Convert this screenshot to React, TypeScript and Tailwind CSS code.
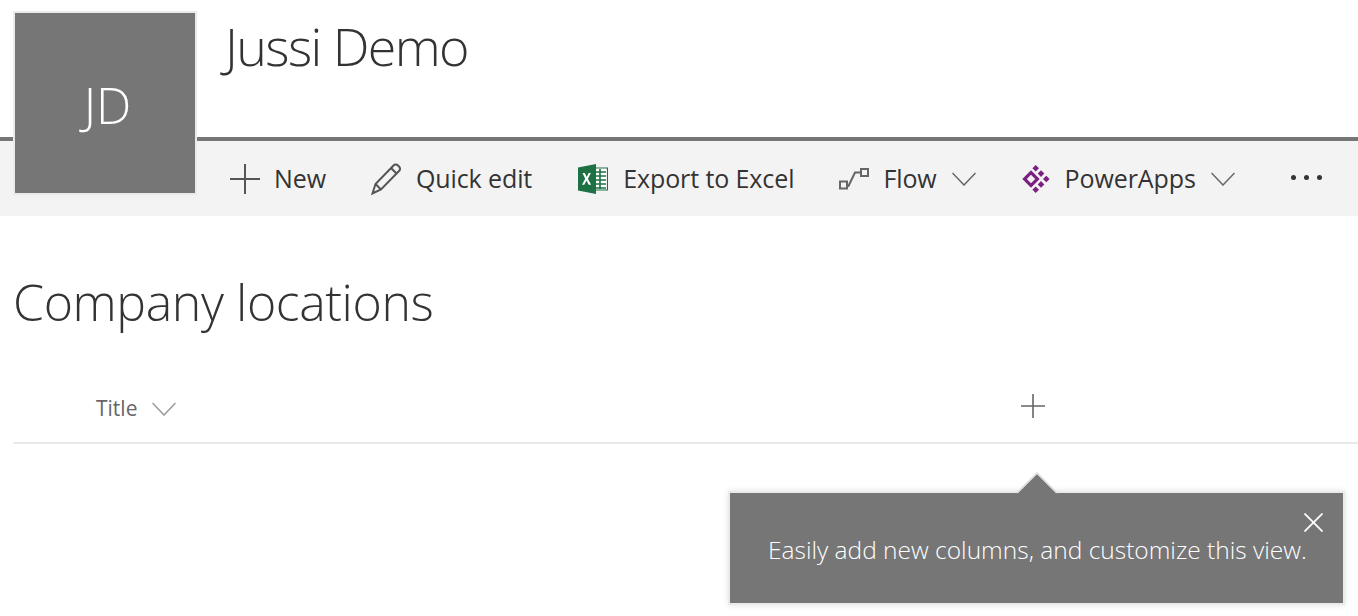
const FONT = "font-['Open_Sans','Noto_Sans',sans-serif]";

function PlusIcon({ className }: { className?: string }) {
  return (
    <svg viewBox="0 0 30 30" className={className} fill="none" stroke="currentColor" strokeWidth="2">
      <path d="M0 15H30M15 0V30" />
    </svg>
  );
}

function PencilIcon() {
  return (
    <svg viewBox="0 0 30 32" className="h-8 w-[30px] text-[#555]" fill="none" stroke="currentColor" strokeWidth="2">
      <path d="M1.500 30.500 4.500 21 22.500 2.500a3 3 0 0 1 4.500 0l1 1a3 3 0 0 1 0 4.500L10 26.500Z" />
      <path d="M4.500 21 10 26.500M20 5l6 6" />
    </svg>
  );
}

function ExcelIcon() {
  return (
    <svg viewBox="0 0 30 30" className="h-[30px] w-[30px]">
      <path d="M16 4h13.500v22H16Z" fill="#fff" stroke="#1e7145" strokeWidth="1.200" />
      <path d="M18 8h10M18 12h10M18 16h10M18 20h10M18 24h10M22 5v20" stroke="#1e7145" strokeWidth="1.600" />
      <path d="M0 3.500 18 0v30L0 26.500Z" fill="#1e7145" />
      <path d="m4.500 9 2.200 0 2 4 2-4h2.200l-3 5.800 3.200 6H10.700l-2.200-4.300-2.200 4.300H4l3.200-6Z" fill="#fff" />
    </svg>
  );
}

function FlowIcon() {
  return (
    <svg viewBox="0 0 30 24" className="h-6 w-[30px] text-[#666]" fill="none" stroke="currentColor" strokeWidth="2">
      <path d="M1 14.500h7v7H1ZM22 2h7v7h-7Z" />
      <path d="M8 19h1.500L16 5.500h6" />
    </svg>
  );
}

const diamond = (x: number, y: number, r: number) => `M${x} ${y - r}l${r} ${r}-${r} ${r}-${r}-${r}Z`;

function PowerAppsIcon() {
  return (
    <svg viewBox="0 0 28 28" className="h-7 w-7" fill="#7b2080">
      <path fillRule="evenodd" d={`${diamond(9, 14, 8.7)}${diamond(9, 14, 4.2)}`} />
      <path d={diamond(13.7, 3.3, 3.3)} />
      <path d={diamond(19, 8.6, 3.3)} />
      <path d={diamond(24.3, 14, 3.3)} />
      <path d={diamond(19, 19.4, 3.3)} />
      <path d={diamond(13.7, 24.7, 3.3)} />
    </svg>
  );
}

function Chevron({ className }: { className?: string }) {
  return (
    <svg viewBox="0 0 24 14" className={className} fill="none" stroke="currentColor" strokeWidth="1.500">
      <path d="M.5 1 12 13 23.500 1" />
    </svg>
  );
}

function CommandBar() {
  return (
    <div className="flex h-[75px] items-center bg-[#f3f3f3] pl-[230px] text-[25px] tracking-[-0.1px] text-[#333]">
      <div className="flex items-center gap-[14px]">
        <PlusIcon className="h-[30px] w-[30px] text-[#555]" />
        <span>New</span>
      </div>
      <div className="ml-[45px] flex items-center gap-[15px]">
        <PencilIcon />
        <span>Quick edit</span>
      </div>
      <div className="ml-[46px] flex items-center gap-[15px]">
        <ExcelIcon />
        <span>Export to Excel</span>
      </div>
      <div className="ml-[45px] flex items-center gap-[14px]">
        <FlowIcon />
        <span>Flow</span>
        <Chevron className="ml-px h-[14px] w-6 text-[#666]" />
      </div>
      <div className="ml-[46px] flex items-center gap-[15px]">
        <PowerAppsIcon />
        <span>PowerApps</span>
        <Chevron className="h-[14px] w-6 text-[#666]" />
      </div>
      <div className="ml-[56px] flex gap-[8px] pb-[2px]">
        <span className="h-[5px] w-[5px] rounded-full bg-[#333]" />
        <span className="h-[5px] w-[5px] rounded-full bg-[#333]" />
        <span className="h-[5px] w-[5px] rounded-full bg-[#333]" />
      </div>
    </div>
  );
}

export default function App() {
  return (
    <div className={`relative h-[616px] w-[1358px] overflow-hidden bg-white ${FONT}`}>
      <div className="h-[137px] pl-[225px] pt-[11px] text-[52px] leading-[70px] font-light tracking-[-1.600px] text-[#333]">
        Jussi Demo
      </div>
      <div className="border-t-4 border-[#767676]">
        <CommandBar />
      </div>

      <div className="absolute left-[13px] top-[11px] flex h-[184px] w-[184px] items-center justify-center border-2 border-[#eaeaea] bg-[#767676] pl-[5px] pt-[5px] text-[50px] font-light text-white">
        JD
      </div>

      <h1 className="pl-[13px] pt-[50px] text-[50px] leading-[72px] font-light tracking-[-0.400px] text-[#333]">
        Company locations
      </h1>

      <div className="ml-[13px] mt-[27px] flex h-[79px] items-center border-b-2 border-[#eaeaea] pl-[83px] pt-[10px]">
        <span className="text-[21px] text-[#666]">Title</span>
        <Chevron className="ml-[15px] h-[14px] w-6 text-[#999]" />
        <PlusIcon className="ml-[845px] -translate-y-[3px] h-6 w-6 text-[#666]" />
      </div>

      <div className="absolute left-[728px] top-[472px] w-[617px]">
        <svg viewBox="0 0 42 23" className="relative z-10 ml-[288px] block h-[23px] w-[42px]">
          <path d="M2 21 21 2 40 21V23H2Z" fill="#767676" />
          <path d="M1 21 21 1 41 21" fill="none" stroke="#dcdcdc" strokeWidth="1.500" />
        </svg>
        <div className="relative -mt-[4px] flex h-[114px] items-center border-2 border-[#eaeaea] bg-[#767676] pl-[38px] pt-[5px] text-[24.500px] font-light text-white shadow-[0_0_6px_rgba(0,0,0,0.12)]">
          Easily add new columns, and customize this view.
          <svg viewBox="0 0 19 19" className="absolute right-[20px] top-[20px] h-[19px] w-[19px]" fill="none" stroke="currentColor" strokeWidth="1.800">
            <path d="M.5.500 18.500 18.500M18.500.500.500 18.500" />
          </svg>
        </div>
      </div>
    </div>
  );
}
